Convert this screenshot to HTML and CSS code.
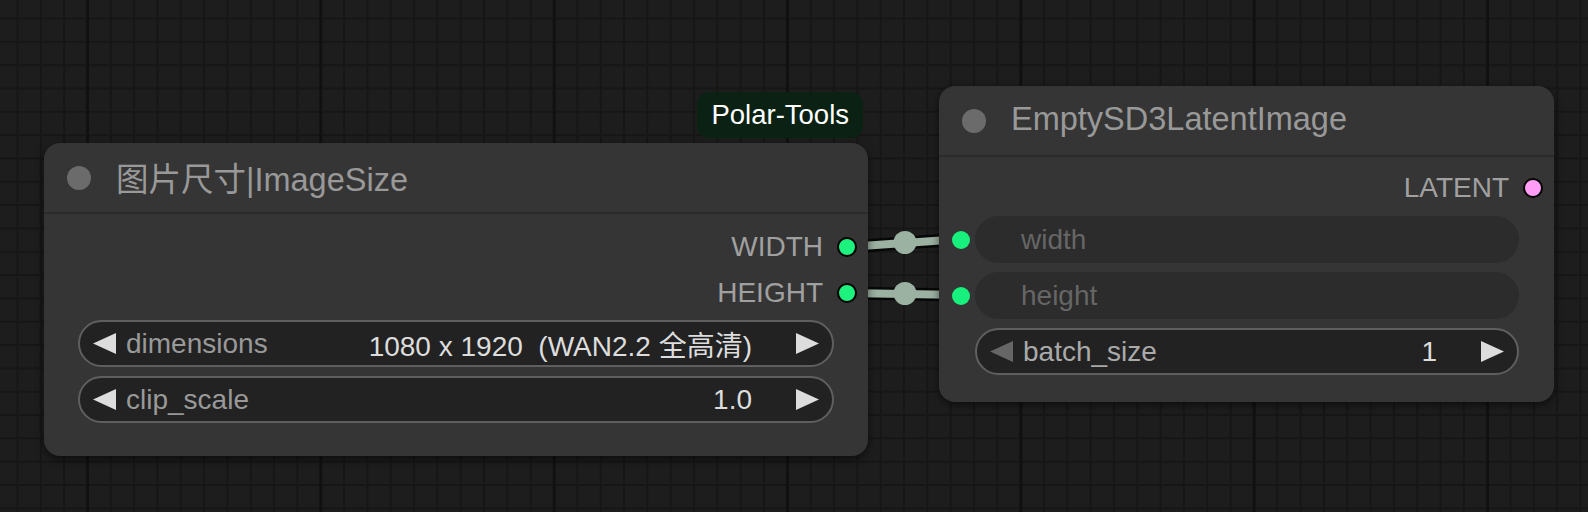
FILE: index.html
```html
<!DOCTYPE html>
<html lang="zh">
<head>
<meta charset="utf-8">
<title>Nodes</title>
<link rel="stylesheet" href="styles.css">
</head>
<body>
<div class="canvas">
  <svg class="links" width="1588" height="512" viewBox="0 0 1588 512">
    <g class="link">
      <line class="link-shadow" x1="847" y1="247" x2="962" y2="239"/>
      <line class="link-line" x1="847" y1="247" x2="962" y2="239"/>
      <circle class="link-mid" cx="905" cy="242.5" r="11.5"/>
    </g>
    <g class="link">
      <line class="link-shadow" x1="847" y1="293" x2="962" y2="295"/>
      <line class="link-line" x1="847" y1="293" x2="962" y2="295"/>
      <circle class="link-mid" cx="905" cy="293.5" r="11.5"/>
    </g>
  </svg>

  <div class="node node-size">
    <div class="badge">Polar-Tools</div>
    <div class="title"><span class="title-dot"></span><span class="title-text">图片尺寸|ImageSize</span></div>
    <div class="body body-size">
      <div class="out-row"><span class="slot-label">WIDTH</span><span class="dot dot-int"></span></div>
      <div class="out-row"><span class="slot-label">HEIGHT</span><span class="dot dot-int"></span></div>
      <div class="widgets widgets-size">
        <div class="widget">
          <svg class="arrow" width="23" height="21" viewBox="0 0 23 21"><polygon points="23,0 23,21 0,10.5"/></svg>
          <span class="w-label">dimensions</span>
          <span class="w-value">1080 x 1920  (WAN2.2 全高清)</span>
          <svg class="arrow arrow-right" width="23" height="21" viewBox="0 0 23 21"><polygon points="0,0 0,21 23,10.5"/></svg>
        </div>
        <div class="widget">
          <svg class="arrow" width="23" height="21" viewBox="0 0 23 21"><polygon points="23,0 23,21 0,10.5"/></svg>
          <span class="w-label">clip_scale</span>
          <span class="w-value">1.0</span>
          <svg class="arrow arrow-right" width="23" height="21" viewBox="0 0 23 21"><polygon points="0,0 0,21 23,10.5"/></svg>
        </div>
      </div>
    </div>
  </div>

  <div class="node node-latent">
    <div class="title"><span class="title-dot"></span><span class="title-text">EmptySD3LatentImage</span></div>
    <div class="body body-latent">
      <div class="out-row"><span class="slot-label">LATENT</span><span class="dot dot-latent"></span></div>
      <div class="widgets widgets-latent">
        <div class="in-row">
          <span class="in-slot"><span class="in-dot"></span></span>
          <div class="input-pill">width</div>
        </div>
        <div class="in-row">
          <span class="in-slot"><span class="in-dot"></span></span>
          <div class="input-pill">height</div>
        </div>
        <div class="in-row">
          <span class="in-slot"></span>
          <div class="widget widget-grow">
            <svg class="arrow arrow-dim" width="23" height="21" viewBox="0 0 23 21"><polygon points="23,0 23,21 0,10.5"/></svg>
            <span class="w-label w-label-light">batch_size</span>
            <span class="w-value">1</span>
            <svg class="arrow arrow-right" width="23" height="21" viewBox="0 0 23 21"><polygon points="0,0 0,21 23,10.5"/></svg>
          </div>
        </div>
      </div>
    </div>
  </div>
</div>
</body>
</html>
```

FILE: styles.css
```css
* {
  box-sizing: border-box;
}

html, body {
  margin: 0;
  padding: 0;
  background: #1d1d1d;
}

body {
  font-family: "Liberation Sans", "Noto Sans CJK SC", Arial, sans-serif;
}

.canvas {
  position: relative;
  width: 1588px;
  height: 512px;
  overflow: hidden;
  background-color: #1d1d1d;
  background-image:
    linear-gradient(to right, #111111 3px, transparent 3px),
    linear-gradient(to right, #161616 2px, transparent 2px),
    linear-gradient(to bottom, #161616 2px, transparent 2px);
  background-size:
    233.333px 100%,
    23.333px 23.333px,
    23.333px 23.333px;
  background-position:
    86px 0,
    16.5px 0,
    0 17.5px;
}

/* links */
.links {
  position: absolute;
  left: 0;
  top: 0;
  z-index: 0;
}

.link-shadow {
  stroke: rgba(0, 0, 0, 0.75);
  stroke-width: 13;
}

.link-line {
  stroke: #9bb1a1;
  stroke-width: 8;
}

.link-mid {
  fill: #9bb1a1;
}

/* nodes */
.node {
  position: absolute;
  z-index: 1;
  background: #353535;
  border-radius: 16px;
  box-shadow: 0 3px 9px rgba(0, 0, 0, 0.55);
  color: #999;
}

.node-size {
  left: 44px;
  top: 143px;
  width: 824px;
}

.node-latent {
  left: 939px;
  top: 86px;
  width: 615px;
}

.badge {
  position: absolute;
  right: 5px;
  bottom: calc(100% + 5px);
  height: 46px;
  padding: 0 14px;
  display: flex;
  align-items: center;
  background: #0a2113;
  border-radius: 12px;
  color: #ffffff;
  font-size: 27.5px;
  white-space: nowrap;
}

.title {
  height: 71px;
  border-bottom: 2px solid #2b2b2b;
  display: flex;
  align-items: center;
  padding-left: 23px;
  gap: 25px;
}

.title-dot {
  width: 24px;
  height: 24px;
  border-radius: 50%;
  background: #6b6b6b;
  flex: none;
}

.title-text {
  font-size: 32.5px;
  color: #999999;
  white-space: nowrap;
  margin-top: -3px;
}

.body-size {
  padding: 10px 0 33px;
}

.body-latent {
  padding: 8px 0 27px;
}

.out-row {
  height: 46px;
  display: flex;
  align-items: center;
  justify-content: flex-end;
  padding-right: 11px;
  gap: 14px;
}

.slot-label {
  font-size: 28px;
  color: #a0a0a0;
}

.dot {
  width: 20px;
  height: 20px;
  border-radius: 50%;
  border: 2px solid #000;
  flex: none;
}

.dot-int {
  background: #1ef27e;
}

.dot-latent {
  background: #ff9cf6;
}

.widgets {
  display: flex;
  flex-direction: column;
  gap: 9px;
}

.widgets-size {
  margin: 4px 34px 0;
}

.widgets-latent {
  margin: 5px 35px 0 0;
}

.widget {
  height: 47px;
  border: 2px solid #5f5f5f;
  border-radius: 24px;
  background: #222222;
  display: flex;
  align-items: center;
  padding: 0 13px;
  font-size: 28px;
  white-space: pre;
}

.widget-grow {
  flex: 1;
}

.arrow {
  flex: none;
  fill: #dddddd;
}

.arrow-dim {
  fill: #666666;
}

.arrow-right {
  margin-left: 44px;
}

.w-label {
  margin-left: 10px;
  color: #999999;
}

.w-label-light {
  color: #aaaaaa;
}

.w-value {
  margin-left: auto;
  color: #dddddd;
}

.in-row {
  display: flex;
  align-items: center;
  height: 47px;
}

.in-slot {
  width: 36px;
  flex: none;
  display: flex;
  align-items: center;
  padding-left: 13px;
}

.in-dot {
  width: 18px;
  height: 18px;
  border-radius: 50%;
  background: #17f07c;
}

.input-pill {
  flex: 1;
  height: 47px;
  border-radius: 24px;
  background: #2c2c2c;
  display: flex;
  align-items: center;
  padding-left: 46px;
  font-size: 28px;
  color: #666666;
}
```
